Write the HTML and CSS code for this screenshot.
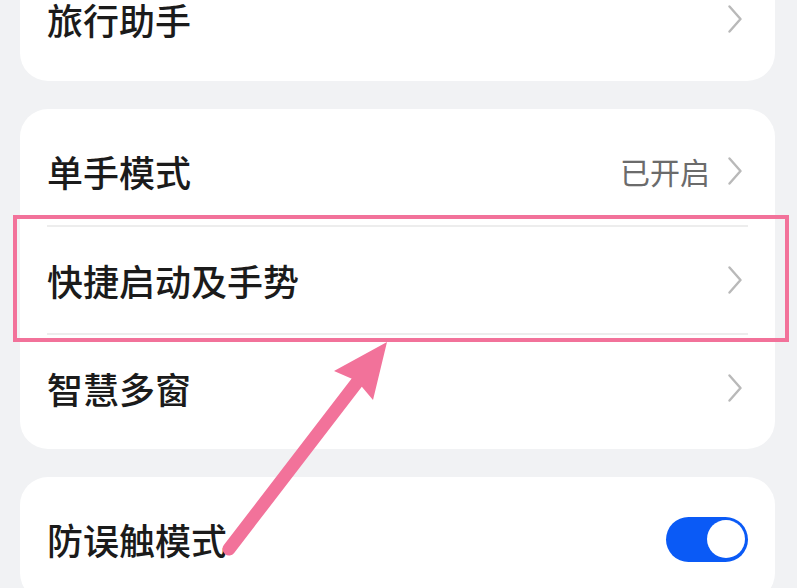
FILE: index.html
```html
<!DOCTYPE html>
<html lang="zh-CN">
<head>
<meta charset="utf-8">
<link rel="stylesheet" href="styles.css">
</head>
<body>
<div class="page">
  <section class="card card-top">
    <div class="row">
      <span class="label">旅行助手</span>
      <span class="right">
        <svg class="chev" viewBox="0 0 14 28" width="14" height="28"><path d="M1.5 1.5 L12.5 14 L1.5 26.5" /></svg>
      </span>
    </div>
  </section>

  <section class="card">
    <div class="row">
      <span class="label">单手模式</span>
      <span class="right">
        <span class="value">已开启</span>
        <svg class="chev" viewBox="0 0 14 28" width="14" height="28"><path d="M1.5 1.5 L12.5 14 L1.5 26.5" /></svg>
      </span>
    </div>
    <div class="row sep">
      <span class="label">快捷启动及手势</span>
      <span class="right">
        <svg class="chev" viewBox="0 0 14 28" width="14" height="28"><path d="M1.5 1.5 L12.5 14 L1.5 26.5" /></svg>
      </span>
    </div>
    <div class="row sep">
      <span class="label">智慧多窗</span>
      <span class="right">
        <svg class="chev" viewBox="0 0 14 28" width="14" height="28"><path d="M1.5 1.5 L12.5 14 L1.5 26.5" /></svg>
      </span>
    </div>
  </section>

  <section class="card">
    <div class="row">
      <span class="label">防误触模式</span>
      <span class="right toggle-wrap">
        <span class="toggle"><span class="knob"></span></span>
      </span>
    </div>
  </section>
</div>

<svg class="annot" viewBox="0 0 797 588" width="797" height="588">
  <rect x="15" y="217" width="772" height="123" fill="none" stroke="#f2729a" stroke-width="4"/>
  <line x1="229" y1="549" x2="358" y2="381" stroke="#f2729a" stroke-width="13" stroke-linecap="round"/>
  <polygon points="387,342 334,371 357,381 373,400" fill="#f2729a"/>
</svg>
</body>
</html>
```

FILE: styles.css
```css
html, body {
  margin: 0;
  padding: 0;
}

body {
  width: 797px;
  height: 588px;
  overflow: hidden;
  background: #f1f2f4;
  font-family: "Noto Sans CJK SC", "Noto Sans", sans-serif;
  position: relative;
}

.page {
  display: flex;
  flex-direction: column;
  gap: 28px;
  padding: 0 22px 0 20px;
  margin-top: -43px;
}

.card {
  background: #ffffff;
  border-radius: 28px;
  padding: 8px 0;
}

.row {
  height: 108px;
  display: flex;
  align-items: center;
  justify-content: space-between;
  margin-left: 27px;
  margin-right: 27px;
  box-sizing: border-box;
}

.row.sep {
  border-top: 2px solid #ededed;
}

.label {
  font-size: 36px;
  font-weight: 500;
  color: #1b1b1b;
  line-height: 1;
  letter-spacing: 0;
}

.right {
  display: flex;
  align-items: center;
  gap: 18px;
  margin-right: 6px;
}

.value {
  font-size: 30px;
  color: #6b6b6b;
  line-height: 1;
}

.chev path {
  fill: none;
  stroke: #b9b9b9;
  stroke-width: 2.4;
  stroke-linecap: round;
  stroke-linejoin: round;
}

.toggle-wrap {
  margin-right: 0;
}

.toggle {
  width: 82px;
  height: 45px;
  border-radius: 23px;
  background: #0a5af6;
  display: flex;
  align-items: center;
  justify-content: flex-end;
  padding: 0 3px;
  box-sizing: border-box;
}

.knob {
  width: 38px;
  height: 38px;
  border-radius: 50%;
  background: #ffffff;
}

.annot {
  position: absolute;
  left: 0;
  top: 0;
}
```
